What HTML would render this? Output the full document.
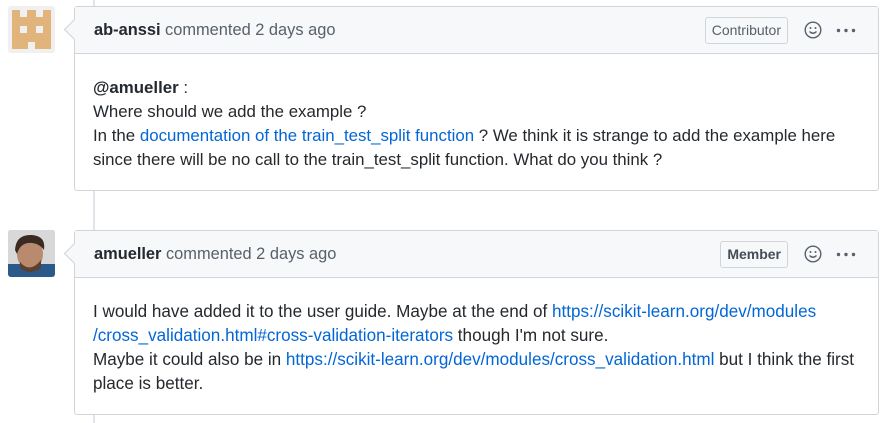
<!DOCTYPE html>
<html><head><style>
body{margin:0;width:885px;height:423px;background:#fff;font-family:"Liberation Sans",sans-serif;color:#24292e;position:relative;overflow:hidden}
.line{position:absolute;left:93px;width:2px;background:#e1e4e8}
.av{position:absolute;left:8px;width:47px;height:47px;border-radius:3px;overflow:hidden}
.box{position:absolute;left:74px;width:803px;height:183px;border:1px solid #d1d5da;border-radius:3px;background:#fff}
.hd{height:46px;background:#f6f8fa;border-bottom:1px solid #d1d5da;position:relative;font-size:16.4px;line-height:47px;padding-left:19px;white-space:nowrap;color:#586069}
.hd b{color:#24292e}
.arrow{position:absolute;left:-8px;top:15px;width:14px;height:14px;background:#f6f8fa;border-left:1px solid #d1d5da;border-bottom:1px solid #d1d5da;transform:rotate(45deg)}
.lab{position:absolute;top:10px;height:25px;line-height:25px;border:1px solid #d1d5da;border-radius:3px;font-size:14px;padding:0 6px;color:#586069;background:#f6f8fa}
.emo{position:absolute;top:14px;right:56px}
.dots{position:absolute;top:21px;right:22px}
.bd{padding:22px 18px;font-size:16.85px;line-height:24px;white-space:nowrap}
a{color:#0366d6;text-decoration:none}
</style></head><body>
<div class="line" style="top:0;height:423px"></div>
<div class="av" style="top:6px;background:#f0f0f0">
<svg width="47" height="47" viewBox="0 0 47 47">
<rect x="4" y="4" width="39" height="39" fill="#e0b47a"/>
<g fill="#f0f0f0">
<rect x="12" y="4" width="7" height="7"/><rect x="28" y="4" width="7" height="7"/>
<rect x="12" y="20" width="7" height="7"/><rect x="28" y="20" width="7" height="7"/>
<rect x="20" y="36" width="7" height="7"/>
</g>
</svg></div>
<div class="box" style="top:6px">
<div class="hd"><div class="arrow"></div><b>ab-anssi</b> commented 2 days ago
<span class="lab" style="right:90px">Contributor</span>
<svg class="emo" width="18" height="18" viewBox="0 0 18 18"><circle cx="9" cy="9" r="7.8" fill="none" stroke="#586069" stroke-width="1.4"/><circle cx="6.5" cy="7" r="1" fill="#586069"/><circle cx="11.5" cy="7" r="1" fill="#586069"/><path d="M5.5 10.5 Q9 14 12.5 10.5" fill="none" stroke="#586069" stroke-width="1.3"/></svg>
<svg class="dots" width="20" height="5" viewBox="0 0 20 5"><circle cx="2.5" cy="2.5" r="1.7" fill="#586069"/><circle cx="10" cy="2.5" r="1.7" fill="#586069"/><circle cx="17.5" cy="2.5" r="1.7" fill="#586069"/></svg></div>
<div class="bd"><b>@amueller</b> :<br>Where should we add the example ?<br>In the <a>documentation of the train_test_split function</a> ? We think it is strange to add the example here<br>since there will be no call to the train_test_split function. What do you think ?</div>
</div>
<div class="av" style="top:230px;background:#8a8a8a">
<svg width="47" height="47" viewBox="0 0 47 47"><rect width="47" height="47" fill="#d8d8d8"/><rect x="0" y="34" width="47" height="13" fill="#2a5a8a"/><ellipse cx="22" cy="24" rx="13" ry="16" fill="#b98a6e"/><path d="M7 20 Q8 4 24 5 Q38 6 36 20 Q30 12 20 13 Q12 14 9 24Z" fill="#3a2a22"/><path d="M12 32 Q22 44 33 30 L33 38 Q22 46 12 38Z" fill="#5a4030"/></svg></div>
<div class="box" style="top:230px">
<div class="hd"><div class="arrow"></div><b>amueller</b> commented 2 days ago
<span class="lab" style="right:90px;color:#444d56;font-weight:bold">Member</span>
<svg class="emo" width="18" height="18" viewBox="0 0 18 18"><circle cx="9" cy="9" r="7.8" fill="none" stroke="#586069" stroke-width="1.4"/><circle cx="6.5" cy="7" r="1" fill="#586069"/><circle cx="11.5" cy="7" r="1" fill="#586069"/><path d="M5.5 10.5 Q9 14 12.5 10.5" fill="none" stroke="#586069" stroke-width="1.3"/></svg>
<svg class="dots" width="20" height="5" viewBox="0 0 20 5"><circle cx="2.5" cy="2.5" r="1.7" fill="#586069"/><circle cx="10" cy="2.5" r="1.7" fill="#586069"/><circle cx="17.5" cy="2.5" r="1.7" fill="#586069"/></svg></div>
<div class="bd" style="font-size:17.1px">I would have added it to the user guide. Maybe at the end of <a>https://scikit-learn.org/dev/modules</a><br><a>/cross_validation.html#cross-validation-iterators</a> though I'm not sure.<br>Maybe it could also be in <a>https://scikit-learn.org/dev/modules/cross_validation.html</a> but I think the first<br>place is better.</div>
</div>
</body></html>
